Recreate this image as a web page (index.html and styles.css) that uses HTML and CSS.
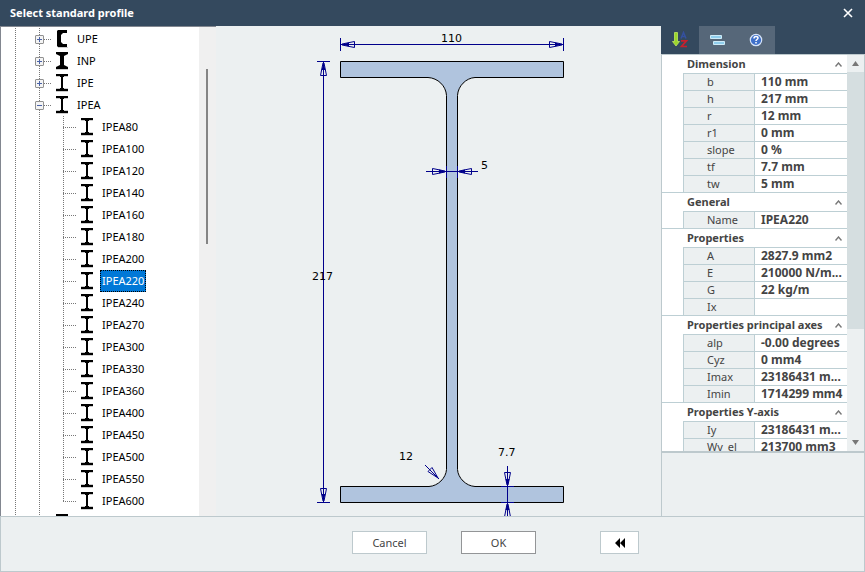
FILE: index.html
```html
<!DOCTYPE html>
<html lang="en">
<head>
<meta charset="utf-8">
<title>Select standard profile</title>
<link rel="stylesheet" href="styles.css">
</head>
<body>
<svg class="defs" aria-hidden="true">
  <symbol id="beam" viewBox="0 0 12 18"><path fill="#ccc" d="M0 2h12v1H0zM0 14h12v1H0zM0 17h12v1H0z"/><path d="M0 0h12v2H0zM0 15h12v2H0zM4 2h4v1H4zM5 3h2v11H5zM4 14h4v1H4z"/></symbol>
  <symbol id="beam-wide" viewBox="0 0 12 18"><path fill="#ccc" d="M0 17h12v1H0z"/><path d="M0 0h12v2L8 4v9l4 2v2H0v-2l4-2V4L0 2z"/></symbol>
  <symbol id="channel" viewBox="0 0 12 18"><path fill="#ccc" d="M2 17h10v1H2z"/><path d="M2 0h9v3H7L5 5v7l2 2h4v3H2L1 16V1z"/></symbol>
</svg>
<header class="titlebar">
  <h1>Select standard profile</h1>
  <button class="close" aria-label="Close"><svg width="10" height="10" viewBox="0 0 10 10"><path d="M1 1l8 8M9 1l-8 8"/></svg></button>
</header>
<main class="content">
  <nav class="tree" aria-label="Profiles">
    <ul id="profiles"></ul>
    <div class="track"><div class="thumb"></div></div>
  </nav>
  <section class="canvas">
    <svg viewBox="216 26 445 490" role="img" aria-label="Profile section">
      <path class="shape" d="M340.500 61.500H563.500V77.500H475C466 78 458 86 457.500 95.500V469.500C458 478 466 486 475 486.500H563.500V502.500H340.500V486.500H429C438 486 446 478 446.500 469.500V95.500C446 86 438 78 428 77.500H340.500Z"/>
      <g class="dim">
        <path d="M340.500 38V51M563.500 38V51M340.500 44.500H563.500"/>
        <path d="M317 61.500H330M317 502.500H330M323.500 61.500V502.500"/>
        <path d="M426 171.500H478M446.500 166V178M457.500 166V178"/>
        <path d="M507.500 466V516M501 486.500H514M501 502.500H514M425 465L439 479"/>
        <path d="M342 44L354.500 41.500V47.500L342 45M562 44L549.500 41.500V47.500L562 45"/>
        <path d="M323 63L320.500 75.500H326.500L324 63M323 501L320.500 488.500H326.500L324 501"/>
        <path d="M445 171L432.500 168.500V174.500L445 172M459 171L471.500 168.500V174.500L459 172"/>
        <path d="M507 485L504.500 472.500H510.500L508 485M507 504L504.500 517H510.500L508 504"/>
        <path d="M438 478L432 467.500L428 471.500Z"/>
        <path class="tip" d="M342 44.500l7-2v4zM562 44.500l-7-2v4zM323.500 63l-2 7h4zM323.500 501l-2-7h4zM446 171.500l-7-2v4zM458 171.500l7-2v4zM507.500 486l-2-7h4zM507.500 503l-2 7h4z"/>
      </g>
      <g class="labels">
        <text x="441" y="42">110</text><text x="312" y="280">217</text><text x="481" y="169">5</text>
        <text x="399" y="460">12</text><text x="498" y="456">7.7</text>
      </g>
    </svg>
  </section>
  <aside class="side">
    <div class="tabs">
      <button class="tab active" aria-label="Sort alphabetically"><svg width="18" height="18" viewBox="0 0 18 18"><path fill="#9bd62a" stroke="#bfe860" stroke-width=".8" d="M3.500 1.500h3v9h2L5 15 1.500 10.500h2z"/><path fill="none" stroke="#34509f" stroke-width="1.500" d="M10 7.500l2.500-6 2.500 6M11 5.500h3"/><path fill="none" stroke="#c8202c" stroke-width="1.700" d="M10 9.800h5.500L10.500 15.500H16"/></svg></button>
      <button class="tab" aria-label="Group"><svg width="18" height="18" viewBox="0 0 18 18"><path fill="#8fcdec" stroke="#cdeaf7" d="M1.500 4.500h11v3h-11zM4.500 10.500h11v3h-11z"/></svg></button>
      <button class="tab" aria-label="Help"><svg width="18" height="18" viewBox="0 0 18 18"><circle cx="9" cy="9" r="5.700" fill="#3f70c9" stroke="#d5e3f8" stroke-width="1.200"/><path fill="none" stroke="#fff" stroke-width="1.500" d="M7 7.500c0-3 4-2.500 4-.5 0 1.500-2 1.500-2 3M9 11v1.500"/></svg></button>
    </div>
    <div class="props">
      <div class="groups" id="groups"></div>
      <div class="scroll"><button aria-label="Scroll up" class="arrow"><svg width="7" height="5" viewBox="0 0 7 5"><path d="M0 5L3.500 0 7 5z"/></svg></button><div class="bar"></div><button aria-label="Scroll down" class="arrow down"><svg width="7" height="5" viewBox="0 0 7 5"><path d="M0 0h7L3.500 5z"/></svg></button></div>
    </div>
    <div class="hint"></div>
  </aside>
</main>
<footer class="actions">
  <button class="btn">Cancel</button>
  <button class="btn primary">OK</button>
  <button class="btn collapse" aria-label="Collapse"><svg width="10" height="10" viewBox="0 0 10 10"><path d="M5 0v10L0 5zM10 0v10L5 5z"/></svg></button>
</footer>
<script src="app.js"></script>
</body>
</html>
```
FILE: styles.css
```css
* { box-sizing: border-box; }
body {
  margin: 0;
  height: 100vh;
  display: flex;
  flex-direction: column;
  background: #ecf0f1;
  color: #444;
  font: 11px/16px "Noto Sans", sans-serif;
}
button { font: inherit; color: inherit; border: 0; padding: 0; background: none; }
svg { display: block; }
.defs { position: absolute; width: 0; height: 0; }

.titlebar {
  display: flex;
  justify-content: space-between;
  align-items: center;
  height: 26px;
  padding: 0 12px 0 10px;
  background: #34495e;
  color: #fff;
}
.titlebar h1 { margin: 0; font-size: 11px; }
.close path { stroke: #fff; stroke-width: 1.6; }

.content { flex: 1; min-height: 0; display: grid; grid-template-columns: 216px 1fr 204px; grid-template-rows: 100%; }

.tree { display: flex; background: #fff; border-left: 1px solid #828790; border-top: 1px solid #828790; color: #000; overflow: hidden; }
.tree ul { flex: 1; margin: 0; padding: 1px 0 0 2px; list-style: none; }
.tree li { display: flex; align-items: center; height: 22px; }
.line { width: 24px; height: 22px; flex: none; background: repeating-linear-gradient(#777 0 1px, transparent 1px 2px) 12px 0 / 1px 100% no-repeat; }
.line.end { background-size: 1px 12px; }
.line.node { display: flex; align-items: center; padding-left: 8px; }
.toggle { width: 9px; height: 9px; flex: none; border: 1px solid #919191; border-radius: 1px; background: linear-gradient(#4b63a7, #4b63a7) 1px 3px / 5px 1px no-repeat, #f4f4f4; }
.toggle.plus { background: linear-gradient(#4b63a7, #4b63a7) 1px 3px / 5px 1px no-repeat, linear-gradient(#4b63a7, #4b63a7) 3px 1px / 1px 5px no-repeat, #f4f4f4; }
.dots { height: 1px; width: 7px; flex: none; background: repeating-linear-gradient(90deg, #777 0 1px, transparent 1px 2px); }
.leaf .dots { width: 13px; margin-left: -12px; }
.tree li svg { width: 12px; height: 18px; margin: 0 7px 0 5px; flex: none; }
.family svg { margin-left: 6px; }
.name { height: 22px; padding: 0 2px; line-height: 22px; }
.name.selected { background: #0078d7; color: #fff; outline: 1px dotted #000; outline-offset: -1px; }
.track { width: 17px; padding: 42px 0 0 7px; background: #f0f0f0; }
.thumb { width: 2px; height: 175px; background: #858585; }

.canvas { min-width: 0; }
.canvas svg { width: 100%; height: 100%; }
.shape { fill: #b0c4de; stroke: #000; }
.dim path { fill: none; stroke: #00008b; }
.dim .tip { fill: #00008b; stroke: none; }
.labels { font: 11px "DejaVu Sans", sans-serif; fill: #000; }

.side { display: flex; flex-direction: column; min-width: 0; }
.tabs { display: flex; height: 28px; background: #34495e; }
.tab { width: 38px; display: flex; align-items: center; justify-content: center; background: #566779; }
.tab.active { background: #34495e; }
.props { display: flex; height: 399px; border: 1px solid #bdc9cd; border-bottom-width: 2px; }
.groups { flex: 1; min-width: 0; background: #fff; overflow: hidden; }
.group { border-bottom: 1px solid #bdcfd4; }
.group h2 { margin: 0; font-size: 11px; }
.group h2 button { display: flex; width: 100%; height: 18px; padding: 0 5px 0 25px; align-items: center; justify-content: space-between; font-weight: bold; white-space: nowrap; }
.group h2 svg { flex: none; }
.group h2 path { fill: none; stroke: #777; stroke-width: 1.4; }
.group table { width: calc(100% - 21px); margin-left: 21px; table-layout: fixed; border-spacing: 0; border-left: 1px solid #bdcfd4; }
.group th, .group td { height: 17px; padding: 0; border-top: 1px solid #bdcfd4; line-height: 16px; text-align: left; white-space: nowrap; overflow: hidden; }
.group th { width: 70px; padding-left: 23px; background: #ecf0f1; font-weight: normal; }
.group td { padding-left: 6px; border-left: 1px solid #bdcfd4; font-size: 12px; font-weight: bold; }
.scroll { width: 17px; display: flex; flex-direction: column; }
.arrow { height: 17px; display: flex; align-items: center; justify-content: center; fill: #777; }
.arrow.down { margin-top: auto; }
.bar { height: 257px; background: #d5dee0; }
.hint { flex: 1; border: solid #bdc9cd; border-width: 0 1px; }

.actions { display: flex; justify-content: flex-end; height: 56px; padding: 14px 225px 0 0; border: 1px solid #bdc9cd; }
.btn { width: 75px; height: 23px; border: 1px solid #bdc9cd; background: #fff; line-height: 20px; }
.primary { margin-left: 34px; border-color: #939597; }
.collapse { width: 39px; margin-left: 64px; display: flex; align-items: center; justify-content: center; }
```
FILE: app.js
```js
const row = (cls, guides, icon, name, extra = "") =>
  `<li class="${cls}">${guides}<svg><use href="#${icon}"/></svg><span class="name ${extra}">${name}</span></li>`;
const line = '<span class="line"></span>';
const dots = '<span class="dots"></span>';

const families = [["UPE", "channel"], ["INP", "beam-wide"], ["IPE", "beam"], ["IPEA", "beam"]];
const sizes = [80, 100, 120, 140, 160, 180, 200, 220, 240, 270, 300, 330, 360, 400, 450, 500, 550, 600];
const family = ([name, icon]) => {
  const open = name === "IPEA";
  const toggle = `<span class="line node"><button class="toggle ${open ? "" : "plus"}" aria-label="Toggle ${name}"></button>${dots}</span>`;
  return row("family", line + toggle, icon, name);
};
document.getElementById("profiles").innerHTML =
  families.map(family).join("") +
  sizes.map(s => row("leaf", line + line + `<span class="line ${s === 600 ? "end" : ""}"></span>` + dots, "beam", "IPEA" + s, s === 220 ? "selected" : "")).join("") +
  row("family", line + line, "beam", "");

const groups = [
  ["Dimension", [["b", "110 mm"], ["h", "217 mm"], ["r", "12 mm"], ["r1", "0 mm"], ["slope", "0 %"], ["tf", "7.7 mm"], ["tw", "5 mm"]]],
  ["General", [["Name", "IPEA220"]]],
  ["Properties", [["A", "2827.9 mm2"], ["E", "210000 N/m..."], ["G", "22 kg/m"], ["Ix", ""]]],
  ["Properties principal axes", [["alp", "-0.00 degrees"], ["Cyz", "0 mm4"], ["Imax", "23186431 m..."], ["Imin", "1714299 mm4"]]],
  ["Properties Y-axis", [["Iy", "23186431 m..."], ["Wy_el", "213700 mm3"]]]
];
document.getElementById("groups").innerHTML = groups.map(([title, rows]) =>
  `<section class="group"><h2><button>${title}<svg width="7" height="5" viewBox="0 0 7 5"><path d="M.5 4.500L3.500 1l3 3.500"/></svg></button></h2><table>` +
  rows.map(([k, v]) => `<tr><th scope="row">${k}</th><td>${v}</td></tr>`).join("") + "</table></section>").join("");
```
